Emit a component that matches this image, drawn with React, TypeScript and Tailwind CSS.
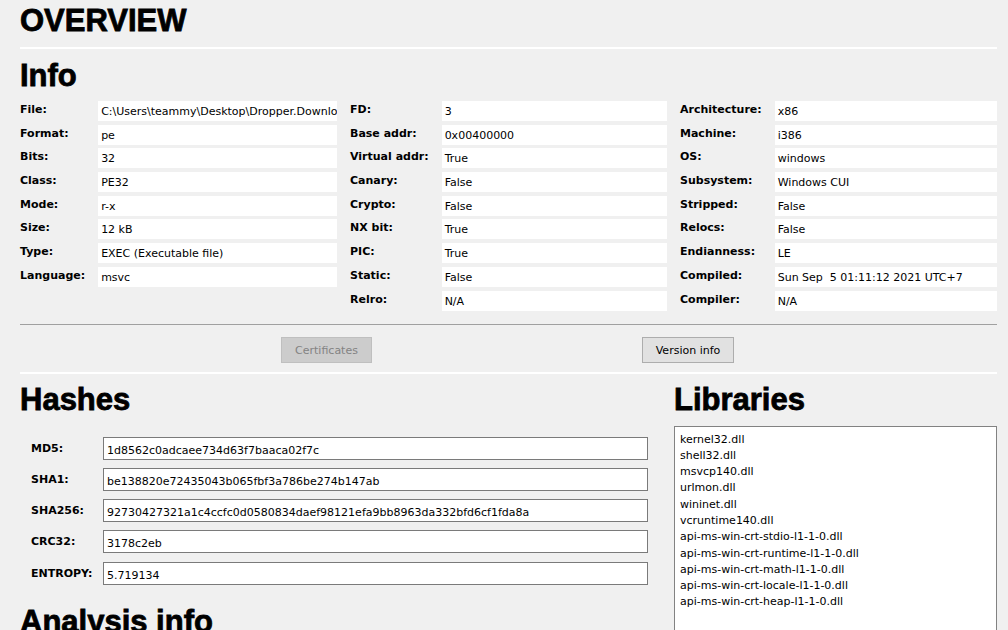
import React from 'react';

type Row = [string, string];

const col1: Row[] = [
  ['File:', 'C:\\Users\\teammy\\Desktop\\Dropper.Downloader.exe'],
  ['Format:', 'pe'],
  ['Bits:', '32'],
  ['Class:', 'PE32'],
  ['Mode:', 'r-x'],
  ['Size:', '12 kB'],
  ['Type:', 'EXEC (Executable file)'],
  ['Language:', 'msvc'],
];

const col2: Row[] = [
  ['FD:', '3'],
  ['Base addr:', '0x00400000'],
  ['Virtual addr:', 'True'],
  ['Canary:', 'False'],
  ['Crypto:', 'False'],
  ['NX bit:', 'True'],
  ['PIC:', 'True'],
  ['Static:', 'False'],
  ['Relro:', 'N/A'],
];

const col3: Row[] = [
  ['Architecture:', 'x86'],
  ['Machine:', 'i386'],
  ['OS:', 'windows'],
  ['Subsystem:', 'Windows CUI'],
  ['Stripped:', 'False'],
  ['Relocs:', 'False'],
  ['Endianness:', 'LE'],
  ['Compiled:', 'Sun Sep  5 01:11:12 2021 UTC+7'],
  ['Compiler:', 'N/A'],
];

const hashes: Row[] = [
  ['MD5:', '1d8562c0adcaee734d63f7baaca02f7c'],
  ['SHA1:', 'be138820e72435043b065fbf3a786be274b147ab'],
  ['SHA256:', '92730427321a1c4ccfc0d0580834daef98121efa9bb8963da332bfd6cf1fda8a'],
  ['CRC32:', '3178c2eb'],
  ['ENTROPY:', '5.719134'],
];

const libraries = [
  'kernel32.dll',
  'shell32.dll',
  'msvcp140.dll',
  'urlmon.dll',
  'wininet.dll',
  'vcruntime140.dll',
  'api-ms-win-crt-stdio-l1-1-0.dll',
  'api-ms-win-crt-runtime-l1-1-0.dll',
  'api-ms-win-crt-math-l1-1-0.dll',
  'api-ms-win-crt-locale-l1-1-0.dll',
  'api-ms-win-crt-heap-l1-1-0.dll',
];

const headingCls =
  "font-['Liberation_Sans',Arial,sans-serif] font-bold text-[31px] leading-[36px] h-[36px] text-black [-webkit-text-stroke:0.8px_black]";

function Heading({ children, className = '' }: { children: React.ReactNode; className?: string }) {
  return <h2 className={`${headingCls} ${className}`}>{children}</h2>;
}

function InfoColumn({ rows }: { rows: Row[] }) {
  return (
    <div className="grid grid-cols-[auto_1fr] gap-x-[13px] gap-y-[3.7px] content-start">
      {rows.map(([label, value]) => (
        <React.Fragment key={label}>
          <div className="font-bold leading-[18px] h-[20px] whitespace-nowrap">{label}</div>
          <div className="bg-white h-[20px] leading-[22px] pl-[3px] overflow-hidden whitespace-pre">{value}</div>
        </React.Fragment>
      ))}
    </div>
  );
}

export default function App() {
  return (
    <div className="w-[1008px] h-[630px] overflow-hidden bg-[#f0f0f0] text-black font-['DejaVu_Sans',Verdana,sans-serif] text-[11px]">
      <div className="ml-5 w-[977px] pt-[3px]">
        <h1 className={headingCls}>OVERVIEW</h1>
        <div className="mt-[8px] h-[2px] bg-white" />

        <Heading className="mt-[9px]">Info</Heading>
        <div className="mt-[7px] grid grid-cols-3 gap-x-[13px]">
          <InfoColumn rows={col1} />
          <InfoColumn rows={col2} />
          <InfoColumn rows={col3} />
        </div>

        <div className="mt-[13px] h-px bg-[#a0a0a0]" />
        <div className="mt-[12px] flex pl-[261px] gap-[270px]">
          <button className="w-[91px] h-[26px] pt-[2px] leading-[20px] bg-[#cccccc] border border-[#bfbfbf] text-[#838383]">
            Certificates
          </button>
          <button className="w-[92px] h-[26px] pt-[2px] leading-[20px] bg-[#e1e1e1] border border-[#adadad] text-black">
            Version info
          </button>
        </div>
        <div className="mt-[9px] h-[2px] bg-white" />

        <div className="mt-[8px] flex gap-[26px]">
          <div className="w-[628px]">
            <Heading>Hashes</Heading>
            <div className="mt-[19px] ml-[11px] grid grid-cols-[72px_1fr] gap-y-[8.3px]">
              {hashes.map(([label, value]) => (
                <React.Fragment key={label}>
                  <div className="font-bold leading-[24px] h-[23px] whitespace-nowrap">{label}</div>
                  <div className="bg-white border border-[#7a7a7a] h-[23px] leading-[25px] pl-[3px] overflow-hidden whitespace-nowrap">
                    {value}
                  </div>
                </React.Fragment>
              ))}
            </div>
            <Heading className="mt-[19px]">Analysis info</Heading>
          </div>

          <div className="flex-1">
            <Heading>Libraries</Heading>
            <div className="mt-[8px] h-[220px] bg-white border border-[#828282] pt-[5px] px-[5px] leading-[16.3px]">
              {libraries.map((lib) => (
                <div key={lib} className="whitespace-nowrap">{lib}</div>
              ))}
            </div>
          </div>
        </div>
      </div>
    </div>
  );
}
